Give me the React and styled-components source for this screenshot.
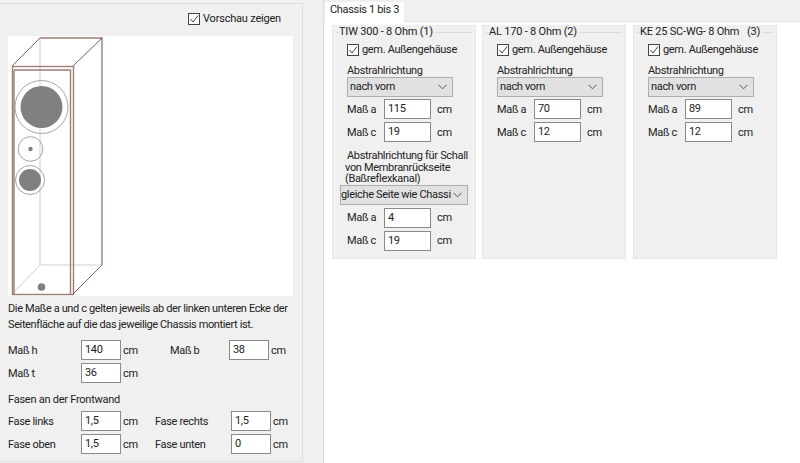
import React from "react";
import styled, { createGlobalStyle } from "styled-components";

const GlobalStyle = createGlobalStyle`
  html, body {
    margin: 0;
    padding: 0;
    background: #fff;
  }
  body {
    font-family: Roboto, "Noto Sans", sans-serif;
    font-size: 11px;
    letter-spacing: -0.33px;
    color: #222;
  }
`;

// left part
const Page = styled.div`
  display: flex;
  width: 800px;
  height: 463px;
  overflow: hidden;
  background: #fff;
`;

const Side = styled.div`
  box-sizing: border-box;
  width: 324px;
  height: 463px;
  flex-shrink: 0;
  padding-top: 3px;
  background: #f0f0f0;
  border-right: 1px solid #dcdcdc;
`;

const SidePanel = styled.div`
  box-sizing: border-box;
  width: 303px;
  height: 459px;
  padding: 8px 0 0 8px;
  border-top: 1px solid #dedede;
  border-right: 1px solid #dedede;
  border-bottom: 1px solid #dedede;
`;

const PreviewToggle = styled.div`
  display: flex;
  justify-content: flex-end;
  padding-right: 21px;
  height: 24px;
  letter-spacing: -0.2px;
`;

const CheckRow = styled.label`
  display: flex;
  align-items: center;
  gap: 3px;
  height: 14px;
  line-height: 14px;
  white-space: nowrap;
`;

const CheckBox = styled.span`
  box-sizing: border-box;
  width: 12px;
  height: 12px;
  border: 1px solid #444;
  background: #fdfdfd;
  display: flex;
  flex-shrink: 0;
`;

const Preview = styled.div`
  width: 285px;
  height: 260px;
  background: #fff;
  svg {
    display: block;
  }
`;

const Note = styled.p`
  margin: 5px 0 7px;
  line-height: 16px;
  letter-spacing: -0.38px;
  white-space: nowrap;
`;

const FormRow = styled.div`
  display: grid;
  grid-template-columns: ${(p) => p.$columns};
  align-items: center;
  height: 20px;
  margin-bottom: 3px;
  white-space: nowrap;
`;

const Heading = styled.div`
  height: 16px;
  line-height: 16px;
  margin: 9px 0 3px;
  letter-spacing: -0.25px;
`;

const Value = styled.div`
  box-sizing: border-box;
  width: ${(p) => p.$width || 40}px;
  height: 20px;
  line-height: 18px;
  padding-left: 3px;
  background: #fff;
  border: 1px solid #8a8a8a;
  color: #222;
`;

const Unit = styled.span`
  padding-left: ${(p) => p.$pad || 2}px;
`;

// tab part
const Main = styled.div`
  flex: 1;
  min-width: 0;
`;

const TabBar = styled.div`
  box-sizing: border-box;
  height: 22px;
  padding: 2px 0 0 1px;
  background: #f0f0f0;
  border-bottom: 1px solid #e3e3e3;
`;

const Tab = styled.div`
  box-sizing: border-box;
  width: 79px;
  height: 20px;
  padding-left: 5px;
  line-height: 16px;
  background: #fff;
  white-space: nowrap;
`;

const TabBody = styled.div`
  display: flex;
  align-items: flex-start;
  gap: 6px;
  padding: 3px 0 0 8px;
`;

const Group = styled.div`
  position: relative;
  box-sizing: border-box;
  width: 144px;
  height: 234px;
  padding: 17px 0 0 14px;
  background: #f0f0f0;
  border: 1px solid #e6e6e6;
  &:last-child {
    margin-left: 1px;
  }
  &::before {
    content: "";
    position: absolute;
    left: 3px;
    right: 3px;
    top: 6px;
    border-top: 1px solid #dcdcdc;
  }
`;

const Legend = styled.div`
  position: absolute;
  top: -1px;
  left: 6px;
  z-index: 1;
  padding-right: 2px;
  line-height: 14px;
  background: #f0f0f0;
  white-space: pre;
  letter-spacing: -0.2px;
`;

const Caption = styled.div`
  height: 13px;
  line-height: 14px;
  margin: 7px 0 0;
`;

const Select = styled.div`
  box-sizing: border-box;
  display: flex;
  align-items: center;
  justify-content: space-between;
  width: ${(p) => p.$width}px;
  height: 20px;
  line-height: 20px;
  margin-left: ${(p) => p.$shift || 0}px;
  padding: 0 5px 0 ${(p) => p.$pad ?? 2}px;
  background: #e1e1e1;
  border: 1px solid #adadad;
  white-space: nowrap;
  svg {
    flex-shrink: 0;
  }
`;

const Fields = styled.div`
  margin-top: ${(p) => p.$top || 2}px;
`;

const MultiLine = styled.div`
  margin: 8px 0 0 -2px;
  line-height: 11.5px;
  white-space: nowrap;
  span {
    display: block;
  }
  span:first-child {
    margin-left: 2px;
  }
`;

const Tick = () => (
  <svg width="10" height="10" viewBox="0 0 10 10">
    <path d="M1.5 5 L4 8 L9 1.5" fill="none" stroke="#444" strokeWidth="1" />
  </svg>
);

const Check = ({ children }) => (
  <CheckRow>
    <CheckBox>
      <Tick />
    </CheckBox>
    {children}
  </CheckRow>
);

const Chevron = () => (
  <svg width="9" height="6" viewBox="0 0 9 6">
    <path d="M0.5 0.8 L4.5 4.8 L8.5 0.8" fill="none" stroke="#555" strokeWidth="1" />
  </svg>
);

const Speaker = () => (
  <svg width="285" height="260" viewBox="8 36 285 260">
    <g fill="none" stroke="#cfcfcf" strokeWidth="1">
      <path d="M40 38 V265 H102" />
      <path d="M12 294 L40 265" />
    </g>
    <g fill="none" stroke="#9b7d74" strokeWidth="1.4">
      <path d="M40 38 H102 V265" />
      <rect x="12.5" y="66.5" width="61" height="228" />
      <path d="M14 70 H70.5 V294 M14 70 V294" />
    </g>
    <g fill="none" stroke="#5a3a32" strokeWidth="0.8">
      <path d="M12 66 L40 38 M73 66 L102 38 M73 294 L102 265" />
    </g>
    <g fill="none" stroke="#9a9a9a" strokeWidth="0.9">
      <circle cx="41.5" cy="107" r="26.5" />
      <circle cx="30.5" cy="149" r="12.3" />
      <circle cx="30" cy="180" r="14.5" />
    </g>
    <g fill="#808080">
      <circle cx="41.5" cy="107" r="21" />
      <circle cx="30.5" cy="149" r="2.2" />
      <circle cx="30" cy="180" r="11" />
      <circle cx="41.5" cy="287" r="3.8" />
    </g>
  </svg>
);

const MeasureRow = ({ label, value }) => (
  <FormRow $columns="37px 52px auto">
    <span>{label}</span>
    <Value $width={47}>{value}</Value>
    <Unit $pad={1}>cm</Unit>
  </FormRow>
);

const chassis = [
  { name: "TIW 300 - 8 Ohm (1)", a: "115", c: "19", back: { a: "4", c: "19" } },
  { name: "AL 170 - 8 Ohm (2)", a: "70", c: "12" },
  { name: "KE 25 SC-WG- 8 Ohm   (3)", a: "89", c: "12" },
];

const App = () => {
  return (
    <Page>
      <GlobalStyle />
      <Side>
        <SidePanel>
          <PreviewToggle>
            <Check>Vorschau zeigen</Check>
          </PreviewToggle>
          <Preview>
            <Speaker />
          </Preview>
          <Note>
            Die Maße a und c gelten jeweils ab der linken unteren Ecke der
            <br />
            Seitenfläche auf die das jeweilige Chassis montiert ist.
          </Note>
          <FormRow $columns="73px 40px 49px 59px 40px auto">
            <span>Maß h</span>
            <Value>140</Value>
            <Unit>cm</Unit>
            <span>Maß b</span>
            <Value>38</Value>
            <Unit>cm</Unit>
          </FormRow>
          <FormRow $columns="73px 40px auto">
            <span>Maß t</span>
            <Value>36</Value>
            <Unit>cm</Unit>
          </FormRow>
          <Heading>Fasen an der Frontwand</Heading>
          <FormRow $columns="73px 40px 34px 76px 40px auto">
            <span>Fase links</span>
            <Value>1,5</Value>
            <Unit>cm</Unit>
            <span>Fase rechts</span>
            <Value>1,5</Value>
            <Unit>cm</Unit>
          </FormRow>
          <FormRow $columns="73px 40px 34px 76px 40px auto">
            <span>Fase oben</span>
            <Value>1,5</Value>
            <Unit>cm</Unit>
            <span>Fase unten</span>
            <Value>0</Value>
            <Unit>cm</Unit>
          </FormRow>
        </SidePanel>
      </Side>
      <Main>
        <TabBar>
          <Tab>Chassis 1 bis 3</Tab>
        </TabBar>
        <TabBody>
          {chassis.map((item) => (
            <Group key={item.name}>
              <Legend>{item.name}</Legend>
              <Check>gem. Außengehäuse</Check>
              <Caption>Abstrahlrichtung</Caption>
              <Select $width={106}>
                nach vorn
                <Chevron />
              </Select>
              <Fields>
                <MeasureRow label="Maß a" value={item.a} />
                <MeasureRow label="Maß c" value={item.c} />
              </Fields>
              {item.back && (
                <>
                  <MultiLine>
                    <span>Abstrahlrichtung für Schall</span>
                    <span>von Membranrückseite</span>
                    <span>(Baßreflexkanal)</span>
                  </MultiLine>
                  <Select $width={128} $shift={-7} $pad={0}>
                    gleiche Seite wie Chassi
                    <Chevron />
                  </Select>
                  <Fields $top={3}>
                    <MeasureRow label="Maß a" value={item.back.a} />
                    <MeasureRow label="Maß c" value={item.back.c} />
                  </Fields>
                </>
              )}
            </Group>
          ))}
        </TabBody>
      </Main>
    </Page>
  );
};

export default App;
